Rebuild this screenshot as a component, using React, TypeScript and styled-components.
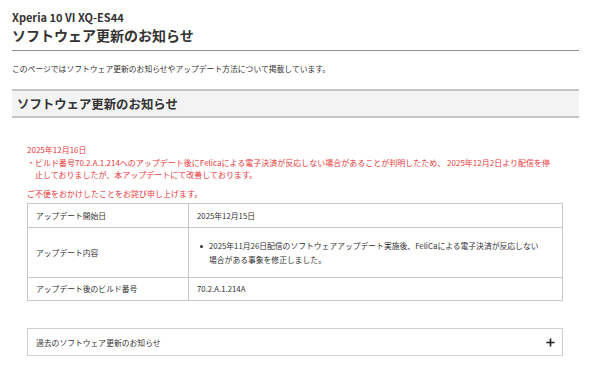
import React from 'react';
import styled, { createGlobalStyle } from 'styled-components';

const GlobalStyle = createGlobalStyle`
  html, body {
    margin: 0;
    padding: 0;
    background: #fff;
  }
  body {
    font-family: "Noto Sans CJK JP", "Noto Sans", sans-serif;
    color: #333;
  }
`;

const Page = styled.main`
  width: 567px;
  padding: 10px 0 0 12px;
`;

const Model = styled.div`
  font-size: 11px;
  font-weight: 700;
  line-height: 14px;
`;

const PageTitle = styled.h1`
  margin: 1px 0 0;
  font-size: 14px;
  font-weight: 700;
  line-height: 20px;
  padding-bottom: 5px;
  border-bottom: 1px solid #8c8c8c;
`;

const Lead = styled.p`
  margin: 12px 0 0;
  font-size: 7.8px;
  line-height: 12px;
`;

const SectionHeader = styled.h2`
  margin: 14px 0 0;
  height: 25px;
  display: flex;
  align-items: center;
  padding-left: 5px;
  background: #f3f3f3;
  border-top: 2px solid #c4c4c4;
  border-bottom: 2px solid #c4c4c4;
  font-size: 12.4px;
  font-weight: 700;
`;

const Body = styled.section`
  padding: 26px 16px 0 15px;
`;

const Notice = styled.div`
  color: #e8393c;
  font-size: 8px;
  line-height: 12px;
`;

const NoticeItem = styled.div`
  display: flex;
  line-height: 12px;
  margin-top: 1px;
  span:first-child {
    width: 8px;
    flex: none;
  }
`;

const Apology = styled.p`
  margin: 7px 0 0;
  color: #e8393c;
  font-size: 8px;
  line-height: 12px;
`;

const Table = styled.table`
  margin-top: 3px;
  width: 100%;
  border-collapse: collapse;
  font-size: 7.8px;
`;

const Cell = styled.td<{ $head?: boolean; $h: number }>`
  border: 1px solid #c8c8c8;
  height: ${(p) => p.$h}px;
  padding: 0 8px;
  vertical-align: middle;
  width: ${(p) => (p.$head ? '144px' : 'auto')};
  line-height: 14px;
`;

const BulletList = styled.ul`
  margin: 0;
  padding: 0 0 0 3px;
  list-style: none;
  li {
    position: relative;
    padding-left: 9px;
    padding-right: 10px;
  }
  li::before {
    content: '';
    position: absolute;
    left: 0;
    top: 6px;
    width: 3px;
    height: 3px;
    border-radius: 50%;
    background: #333;
  }
`;

const Accordion = styled.button`
  margin-top: 27px;
  width: 100%;
  height: 28px;
  display: flex;
  align-items: center;
  justify-content: space-between;
  padding: 0 7px 0 8px;
  background: #fff;
  border: 1px solid #cfcfcf;
  font-family: inherit;
  font-size: 7.8px;
  color: #333;
`;

const Plus = styled.svg`
  width: 9px;
  height: 9px;
`;

export default function App() {
  return (
    <>
      <GlobalStyle />
      <Page>
        <Model>Xperia 10 VI XQ-ES44</Model>
        <PageTitle>ソフトウェア更新のお知らせ</PageTitle>
        <Lead>このページではソフトウェア更新のお知らせやアップデート方法について掲載しています。</Lead>
        <SectionHeader>ソフトウェア更新のお知らせ</SectionHeader>
        <Body>
          <Notice>
            <div>2025年12月16日</div>
            <NoticeItem>
              <span>・</span>
              <span>
                ビルド番号70.2.A.1.214へのアップデート後にFelicaによる電子決済が反応しない場合があることが判明したため、 2025年12月2日より配信を停
                <br />
                止しておりましたが、本アップデートにて改善しております。
              </span>
            </NoticeItem>
          </Notice>
          <Apology>ご不便をおかけしたことをお詫び申し上げます。</Apology>
          <Table>
            <tbody>
              <tr>
                <Cell $head $h={23}>アップデート開始日</Cell>
                <Cell $h={23}>2025年12月15日</Cell>
              </tr>
              <tr>
                <Cell $head $h={49}>アップデート内容</Cell>
                <Cell $h={49}>
                  <BulletList>
                    <li>
                      2025年11月26日配信のソフトウェアアップデート実施後、FeliCaによる電子決済が反応しない
                      <br />
                      場合がある事象を修正しました。
                    </li>
                  </BulletList>
                </Cell>
              </tr>
              <tr>
                <Cell $head $h={22}>アップデート後のビルド番号</Cell>
                <Cell $h={22}>70.2.A.1.214A</Cell>
              </tr>
            </tbody>
          </Table>
          <Accordion type="button">
            <span>過去のソフトウェア更新のお知らせ</span>
            <Plus viewBox="0 0 10 10">
              <path d="M5 0.5v9M0.5 5h9" stroke="#222" strokeWidth="1.8" />
            </Plus>
          </Accordion>
        </Body>
      </Page>
    </>
  );
}
